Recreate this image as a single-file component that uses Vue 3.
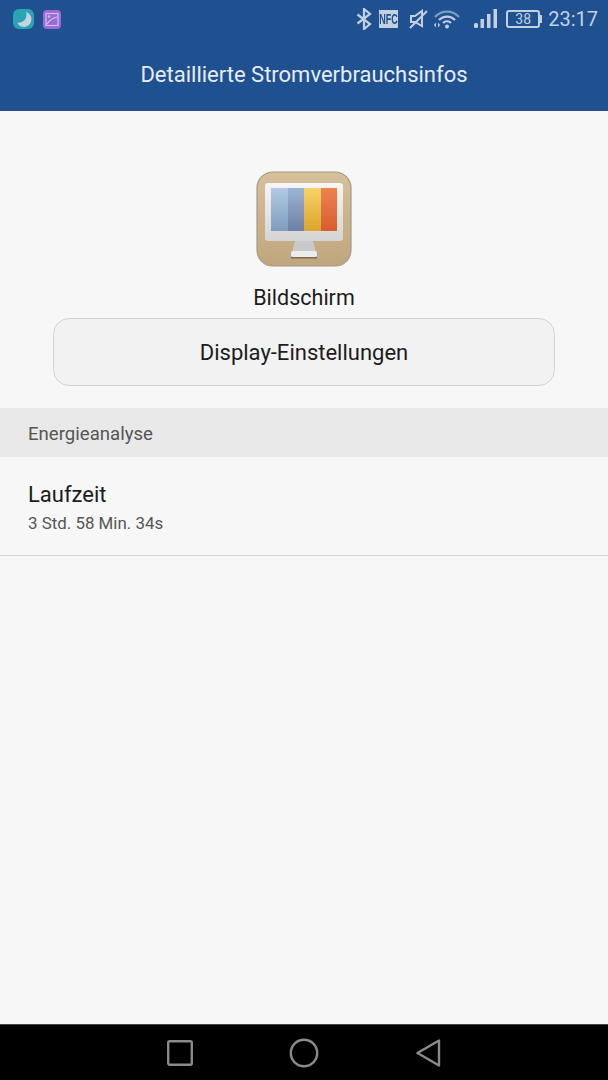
<template>
  <div class="screen">
    <header class="appbar">
      <div class="statusbar">
        <div class="notif-icons">
          <svg width="21" height="20" viewBox="0 0 21 20">
            <rect width="21" height="20" rx="6" fill="#2aa3b4" />
            <path d="M13 3 A7.6 7.6 0 1 1 4 13.6 A8 8 0 0 0 13 3 Z" fill="#c6d4e2" />
          </svg>
          <svg width="18" height="19" viewBox="0 0 18 19">
            <rect width="18" height="19" rx="4" fill="#9a6ad6" />
            <rect x="3" y="3.5" width="12" height="12" fill="none" stroke="#d3c0ef" stroke-width="1.2" />
            <path d="M4 14 C7 9 10 8 14 7" fill="none" stroke="#d3c0ef" stroke-width="1.2" />
            <circle cx="6" cy="6.5" r="1.2" fill="#d3c0ef" />
          </svg>
        </div>
        <div class="sys-icons">
          <svg width="16" height="22" viewBox="0 0 16 22">
            <path d="M1.5 6.5 L14 16 L8 21 L8 1 L14 6 L1.5 15.5" fill="none" stroke="#c3d0e2" stroke-width="2.2" />
          </svg>
          <div class="nfc"><span>NFC</span></div>
          <svg class="sys-mute" width="19" height="20" viewBox="0 0 19 20">
            <path d="M2 7 H6 L13 2 V17 L6 13 H2 Z" fill="none" stroke="#c3d0e2" stroke-width="2" />
            <path d="M1 19 L18 2" stroke="#c3d0e2" stroke-width="2" />
          </svg>
          <svg class="sys-wifi" width="28" height="20" viewBox="0 0 28 20">
            <path d="M2 8 A16 16 0 0 1 26 8" fill="none" stroke="#7f9cc2" stroke-width="2.2" />
            <path d="M6 11 A11 11 0 0 1 22 11" fill="none" stroke="#c3d0e2" stroke-width="2.2" />
            <path d="M10 14 A6 6 0 0 1 18 14" fill="none" stroke="#c3d0e2" stroke-width="2.2" />
            <circle cx="14" cy="17.5" r="2" fill="#c3d0e2" />
            <path d="M1 16 L3 13.5 V18.5 Z M7 16 L5 13.5 V18.5 Z" fill="#c3d0e2" />
          </svg>
          <svg class="sys-signal" width="23" height="20" viewBox="0 0 23 20">
            <rect x="0" y="14" width="4" height="5" rx="1.5" fill="#c3d0e2" />
            <rect x="6.5" y="10" width="3.5" height="9" fill="#c3d0e2" />
            <rect x="13" y="5" width="3.5" height="14" fill="#c3d0e2" />
            <rect x="19.5" y="0" width="3.5" height="19" fill="#c3d0e2" />
          </svg>
          <div class="battery">
            <span class="battery-body">38</span>
            <span class="battery-tip"></span>
          </div>
          <span class="clock">23:17</span>
        </div>
      </div>
      <h1 class="title">Detaillierte Stromverbrauchsinfos</h1>
    </header>

    <main class="content">
      <section class="hero">
        <svg class="app-icon" width="98" height="98" viewBox="0 0 98 98">
          <defs>
            <linearGradient id="tile" x1="0" y1="0" x2="0" y2="1">
              <stop offset="0" stop-color="#d6c09a" />
              <stop offset="1" stop-color="#bfa67e" />
            </linearGradient>
            <linearGradient id="bezel" x1="0" y1="0" x2="0" y2="1">
              <stop offset="0" stop-color="#f6f6f6" />
              <stop offset="1" stop-color="#d4d4d4" />
            </linearGradient>
            <linearGradient id="c1" x1="0" y1="0" x2="0" y2="1">
              <stop offset="0" stop-color="#b2cae4" />
              <stop offset="1" stop-color="#7f9cc0" />
            </linearGradient>
            <linearGradient id="c2" x1="0" y1="0" x2="0" y2="1">
              <stop offset="0" stop-color="#9db5d4" />
              <stop offset="1" stop-color="#6c80a4" />
            </linearGradient>
            <linearGradient id="c3" x1="0" y1="0" x2="0" y2="1">
              <stop offset="0" stop-color="#f8d268" />
              <stop offset="1" stop-color="#dba52c" />
            </linearGradient>
            <linearGradient id="c4" x1="0" y1="0" x2="0" y2="1">
              <stop offset="0" stop-color="#ee8352" />
              <stop offset="1" stop-color="#d85c2c" />
            </linearGradient>
          </defs>
          <rect x="2" y="2" width="94" height="94" rx="16" fill="url(#tile)" stroke="#a39a86" stroke-width="1.2" />
          <rect x="10" y="13" width="78" height="58" rx="3" fill="url(#bezel)" />
          <rect x="16" y="18" width="17" height="43" fill="url(#c1)" />
          <rect x="33" y="18" width="16" height="43" fill="url(#c2)" />
          <rect x="49" y="18" width="17" height="43" fill="url(#c3)" />
          <rect x="66" y="18" width="16" height="43" fill="url(#c4)" />
          <path d="M40 71 H58 L61 82 H37 Z" fill="#c9c9c9" />
          <rect x="36" y="81" width="26" height="6" rx="2" fill="#ececec" />
          <rect x="36" y="87" width="26" height="1.5" fill="#7d6a4c" />
        </svg>
        <div class="hero-label">Bildschirm</div>
        <button type="button" class="settings-btn">Display-Einstellungen</button>
      </section>

      <div class="section-head">Energieanalyse</div>

      <div class="row">
        <div class="row-title">Laufzeit</div>
        <div class="row-sub">3 Std. 58 Min. 34s</div>
      </div>
    </main>

    <nav class="navbar">
      <svg width="28" height="28" viewBox="0 0 28 28">
        <rect x="3.2" y="2.2" width="23.6" height="23.6" rx="1.5" fill="none" stroke="#8a8a8a" stroke-width="2.4" />
      </svg>
      <svg width="30" height="30" viewBox="0 0 30 30">
        <circle cx="15" cy="15" r="13.2" fill="none" stroke="#8a8a8a" stroke-width="2.4" />
      </svg>
      <svg width="28" height="30" viewBox="0 0 28 30">
        <path d="M2.5 15 L24 2.5 V27.5 Z" fill="none" stroke="#8a8a8a" stroke-width="2.4" stroke-linejoin="round" />
      </svg>
    </nav>
  </div>
</template>

<script setup>
</script>

<style>
html,
body {
  margin: 0;
  background: #f7f7f7;
}
</style>

<style scoped>
.screen {
  display: flex;
  flex-direction: column;
  width: 608px;
  height: 1080px;
  overflow: hidden;
  font-family: Roboto, "Noto Sans", sans-serif;
  background: #f7f7f7;
}

.appbar {
  height: 111px;
  flex: none;
  background: #1f5190;
}

.statusbar {
  display: flex;
  align-items: center;
  justify-content: space-between;
  height: 38px;
  padding: 0 10px 0 13px;
}

.notif-icons {
  display: flex;
  align-items: center;
  gap: 9px;
}

.notif-icons svg,
.sys-icons svg {
  display: block;
}

.sys-icons {
  display: flex;
  align-items: center;
  color: #c3d0e2;
}

.nfc {
  width: 19px;
  height: 18px;
  margin-left: 7px;
  overflow: hidden;
  background: #c3d0e2;
  color: #1f5190;
  font: 700 15px/18px "Liberation Sans", sans-serif;
  text-align: center;
}

.nfc span {
  display: inline-block;
  margin-left: -6px;
  transform: scaleX(0.6);
  transform-origin: center;
  width: 31px;
}

.sys-mute {
  margin-left: 11px;
}

.sys-wifi {
  margin-left: 5px;
}

.sys-signal {
  margin-left: 13px;
}

.battery {
  display: flex;
  align-items: center;
  margin-left: 9px;
}

.battery-body {
  width: 30px;
  height: 14px;
  border: 2px solid #c3d0e2;
  border-radius: 3px;
  font-size: 14px;
  line-height: 14px;
  text-align: center;
}

.battery-tip {
  width: 2px;
  height: 8px;
  background: #c3d0e2;
}

.clock {
  margin-left: 6px;
  font-size: 20px;
  line-height: 24px;
}

.title {
  margin: 0;
  padding-top: 18px;
  font-size: 22px;
  font-weight: 400;
  line-height: 38px;
  color: #e6ecf4;
  text-align: center;
}

.content {
  flex: 1;
}

.hero {
  display: flex;
  flex-direction: column;
  align-items: center;
  padding-top: 59px;
}

.app-icon {
  display: block;
  filter: blur(0.6px);
}

.hero-label {
  margin-top: 16px;
  font-size: 21.5px;
  line-height: 28px;
  color: #1c1c1c;
}

.settings-btn {
  width: 502px;
  height: 68px;
  margin-top: 6px;
  padding-top: 2px;
  border: 1px solid #d4d4d4;
  border-radius: 16px;
  background: #f2f2f2;
  font-family: inherit;
  font-size: 22px;
  color: #1c1c1c;
}

.section-head {
  height: 49px;
  margin-top: 22px;
  padding: 1px 0 0 28px;
  box-sizing: border-box;
  background: #e9e9e9;
  font-size: 18.6px;
  line-height: 50px;
  color: #555;
}

.row {
  height: 99px;
  padding: 25px 28px 0;
  box-sizing: border-box;
  border-bottom: 1px solid #d6d6d6;
}

.row-title {
  font-size: 22px;
  line-height: 26px;
  color: #1c1c1c;
}

.row-sub {
  margin-top: 4px;
  font-size: 16.9px;
  line-height: 22px;
  color: #555;
}

.navbar {
  display: flex;
  align-items: center;
  justify-content: center;
  gap: 96px;
  height: 55px;
  flex: none;
  border-top: 1px solid #444;
  background: #000;
}
</style>
